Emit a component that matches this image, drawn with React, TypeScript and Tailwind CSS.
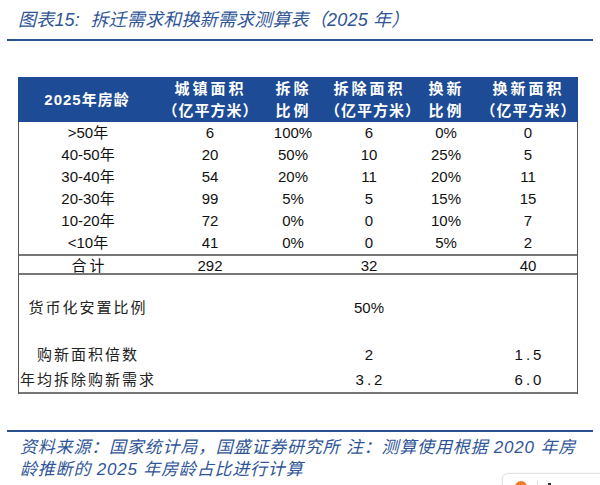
import React from "react";

const cols = "grid grid-cols-[138px_106px_60px_92px_62px_102px]";
const font = "font-['Liberation_Sans','Noto_Sans_CJK_SC',sans-serif]";

const rows = [
  [">50年", "6", "100%", "6", "0%", "0"],
  ["40-50年", "20", "50%", "10", "25%", "5"],
  ["30-40年", "54", "20%", "11", "20%", "11"],
  ["20-30年", "99", "5%", "5", "15%", "15"],
  ["10-20年", "72", "0%", "0", "10%", "7"],
  ["<10年", "41", "0%", "0", "5%", "2"],
];

const headers = [
  ["2025年房龄"],
  ["城镇面积", "（亿平方米）"],
  ["拆除", "比例"],
  ["拆除面积", "（亿平方米）"],
  ["换新", "比例"],
  ["换新面积", "（亿平方米）"],
];

export default function App() {
  return (
    <div className={`w-[600px] h-[485px] bg-white relative overflow-hidden ${font}`}>
      {/* title */}
      <div className="pt-[8px] pl-[18px] h-[39px] text-[18px] leading-[24px] italic tracking-[0.2px] text-[#2f5597]">
        图表15:&nbsp; 拆迁需求和换新需求测算表（2025 年）
      </div>
      <div className="mx-[7px] h-[2px] bg-[#2a5190]" />

      {/* table */}
      <div className="mt-[36px] ml-[18px] w-[560px]">
        <div className={`${cols} h-[45px] bg-[#1d4b95] text-white text-[15px] leading-[22px] pt-[1px]`}>
          {headers.map((h, i) => (
            <div
              key={i}
              className={`flex flex-col items-center justify-center font-semibold ${i == 0 ? "tracking-[1px]" : "tracking-[3px] pl-[3px]"}`}
            >
              {h.map((t, j) => (
                <span key={j} className={t.startsWith("（") ? "tracking-[1px]" : ""}>{t}</span>
              ))}
            </div>
          ))}
        </div>
        <div className="border-x border-[#555] text-[15px] text-[#111]">
          {rows.map((r, i) => (
            <div key={i} className={`${cols} h-[22px] items-center leading-[22px]`}>
              {r.map((c, j) => (
                <div key={j} className="text-center">{c}</div>
              ))}
            </div>
          ))}
          <div className={`${cols} h-[21px] items-center border-y-2 border-[#777] leading-[20px]`}>
            <div className="text-center tracking-[3px] pl-[3px]">合计</div>
            <div className="text-center">292</div>
            <div />
            <div className="text-center">32</div>
            <div />
            <div className="text-center">40</div>
          </div>
          <div className="pt-[22px] pb-[1px] border-b-2 border-[#777] text-[15px]">
            <div className={`${cols} h-[22px] items-center leading-[22px]`}>
              <div className="text-center tracking-[2px] text-[#222]">货币化安置比例</div>
              <div />
              <div />
              <div className="text-center">50%</div>
            </div>
            <div className={`${cols} h-[22px] mt-[25px] items-center leading-[22px]`}>
              <div className="text-center tracking-[2px] text-[#222]">购新面积倍数</div>
              <div />
              <div />
              <div className="text-center">2</div>
              <div />
              <div className="text-center tracking-[3px] pl-[3px]">1.5</div>
            </div>
            <div className={`${cols} h-[22px] mt-[3px] items-center leading-[22px]`}>
              <div className="text-center tracking-[2px] text-[#222]">年均拆除购新需求</div>
              <div />
              <div />
              <div className="text-center tracking-[3px] pl-[3px]">3.2</div>
              <div />
              <div className="text-center tracking-[3px] pl-[3px]">6.0</div>
            </div>
          </div>
        </div>
      </div>

      {/* footer */}
      <div className="mt-[36px] mx-[7px] h-[2px] bg-[#2a5190]" />
      <div className="pt-[5px] pl-[20px] pr-[10px] text-[17px] leading-[22px] italic tracking-[0.8px] text-[#2f5597]">
        <div className="whitespace-nowrap">资料来源：国家统计局，国盛证券研究所 注：测算使用根据 2020 年房</div>
        <div>龄推断的 2025 年房龄占比进行计算</div>
      </div>

      {/* partial widget at bottom-right */}
      <div className="absolute left-[502px] top-[473px] w-[110px] h-[30px] rounded-[6px] border border-[#e2e2e2] bg-white shadow-[0_0_3px_rgba(0,0,0,0.08)] flex items-start pt-[7px] pl-[12px] gap-[10px]">
        <div className="w-[12px] h-[8px] rounded-t-[6px] bg-[#f07a2a]" />
        <div className="w-px h-[14px] bg-[#ddd]" />
        <div className="w-[3px] h-[6px] bg-[#333] mt-[2px]" />
        <div className="w-[3px] h-[4px] bg-[#333] mt-[4px] ml-[10px]" />
      </div>
    </div>
  );
}
